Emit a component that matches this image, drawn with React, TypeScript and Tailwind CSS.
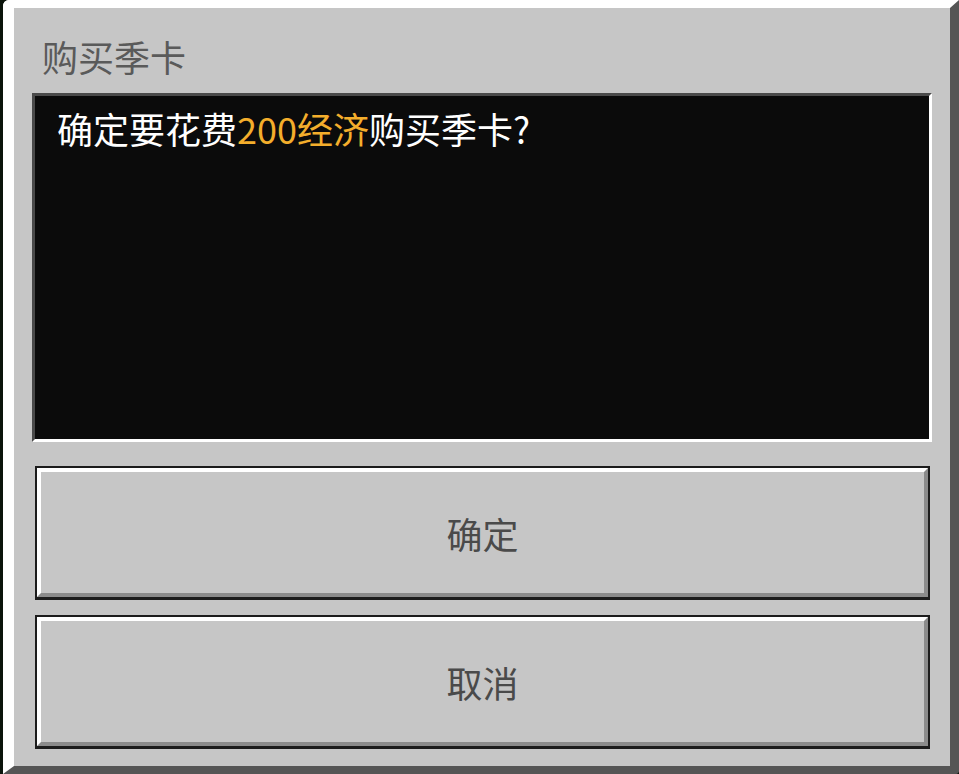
import React from 'react';

const font = { fontFamily: '"Noto Sans CJK SC", "Noto Sans", sans-serif' };

const McButton: React.FC<{ label: string }> = ({ label }) => (
  <button className="w-full h-[134px] border-2 border-b-[3px] border-[#1c1c1c] bg-[#c6c6c6] block">
    <div className="h-full border-t-[4px] border-l-[4px] border-b-[4px] border-r-[4px] border-t-white border-l-white border-b-[#8b8b8b] border-r-[#8b8b8b] flex items-center justify-center">
      <span className="text-[36px] leading-[36px] text-[#4a4a4a]">{label}</span>
    </div>
  </button>
);

const App: React.FC = () => {
  return (
    <div className="w-[959px] h-[774px] bg-[#0b140b] pl-[3px] overflow-hidden" style={font}>
      <div className="h-full rounded-tl-[6px] rounded-br-[4px] border-t-[8px] border-l-[11px] border-r-[9px] border-b-[8px] border-t-white border-l-white border-r-[#555555] border-b-[#555555] bg-[#c6c6c6] flex flex-col px-[18px]">
        {/* Title */}
        <div className="mt-[30px] pl-[10px] h-[36px] text-[36px] leading-[36px] text-[#5a5a5a]">
          购买季卡
        </div>

        {/* Message box */}
        <div className="mt-[19px] h-[349px] border-[3px] border-t-[#4a4a4a] border-l-[#4a4a4a] border-r-white border-b-white bg-[#0b0b0b] px-[22px] pt-[14px]">
          <p className="text-[36px] leading-[36px] text-white">
            确定要花费<span className="text-[#f4ae2c]">200经济</span>购买季卡?
          </p>
        </div>

        {/* Buttons */}
        <div className="mt-[24px] px-[3px] pr-[2px] flex flex-col gap-[15px]">
          <McButton label="确定" />
          <McButton label="取消" />
        </div>
      </div>
    </div>
  );
};

export default App;
